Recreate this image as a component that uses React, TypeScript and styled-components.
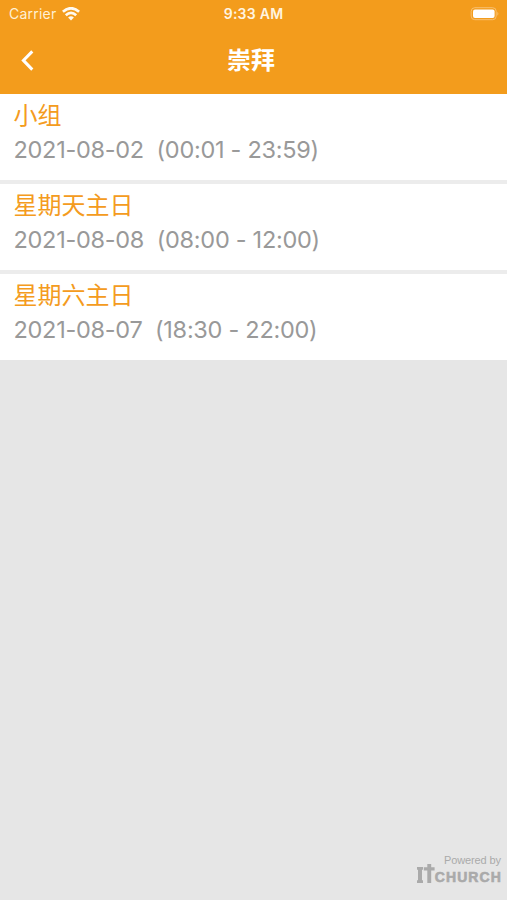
import React from "react";
import styled, { createGlobalStyle } from "styled-components";

const GlobalStyle = createGlobalStyle`
  * { box-sizing: border-box; }
  body {
    margin: 0;
    background: #e6e6e6;
    font-family: Inter, "Noto Sans CJK SC", sans-serif;
  }
`;

const Screen = styled.div`
  height: 900px;
  display: flex;
  flex-direction: column;
  background: #e6e6e6;
  overflow: hidden;
`;

const Header = styled.header`
  height: 94px;
  flex: none;
  background: #f39c1c;
  color: #fff;
`;

const StatusBar = styled.div`
  height: 27px;
  padding: 0 7px 0 9px;
  display: grid;
  grid-template-columns: 1fr auto 1fr;
  align-items: center;
  font-size: 14px;
  line-height: 27px;
`;

const Carrier = styled.div`
  display: flex;
  align-items: center;
  gap: 6px;
  color: #fff0d4;
  letter-spacing: 0.22px;
`;

const Clock = styled.div`
  margin-right: 2px;
  font-size: 14px;
  font-weight: 600;
  letter-spacing: 0.25px;
  color: #fff4e0;
`;

const BatterySlot = styled.div`
  display: flex;
  justify-content: flex-end;
`;

const NavBar = styled.nav`
  height: 67px;
  padding: 0 20px;
  display: grid;
  grid-template-columns: 1fr auto 1fr;
  align-items: center;
`;

const BackButton = styled.button`
  width: 16px;
  height: 24px;
  padding: 0;
  border: 0;
  background: none;
  display: flex;
`;

const Title = styled.h1`
  margin: 0 5px 0 0;
  font-size: 24px;
  line-height: 36px;
  font-weight: 700;
`;

const List = styled.ul`
  margin: 0;
  padding: 0;
  list-style: none;
  display: flex;
  flex-direction: column;
  gap: 4px;
  background: #ececec;
`;

const Item = styled.li`
  height: 86px;
  padding: 3px 14px 0 13.5px;
  background: #fff;
`;

const ItemTitle = styled.div`
  height: 35px;
  line-height: 37px;
  font-size: 24px;
  color: #f49b20;
`;

const ItemTime = styled.div`
  height: 35px;
  line-height: 35px;
  font-size: 23.5px;
  letter-spacing: -0.28px;
  color: #999;
  white-space: pre;
`;

const Footer = styled.footer`
  margin-top: auto;
  padding: 0 5px 17px 0;
  display: flex;
  flex-direction: column;
  align-items: flex-end;
  font-family: "Liberation Sans", sans-serif;
  color: #aaa;
`;

const Powered = styled.div`
  padding-right: 1px;
  font-size: 11px;
  line-height: 12px;
  letter-spacing: -0.1px;
`;

const Brand = styled.div`
  display: flex;
  align-items: flex-end;
  height: 17px;
`;

const BrandName = styled.span`
  font-size: 14px;
  line-height: 14px;
  height: 13px;
  font-weight: 700;
  letter-spacing: 1.1px;
  -webkit-text-stroke: 0.6px #aaa;
`;

const services = [
  { name: "小组", date: "2021-08-02", time: "(00:01 - 23:59)" },
  { name: "星期天主日", date: "2021-08-08", time: "(08:00 - 12:00)" },
  { name: "星期六主日", date: "2021-08-07", time: "(18:30 - 22:00)" },
];

const WifiIcon = () => (
  <svg width="18" height="14" viewBox="0 0 18 14" fill="none" stroke="#fffaf0" strokeWidth="2.7">
    <path d="M0.9 4.8Q9 -2.3 17.1 4.8" />
    <path d="M3.8 8.2Q9 3.5 14.2 8.2" />
    <path d="M6.1 10.5Q9 8 11.9 10.5L9 13.4Z" fill="#fffaf0" stroke="none" />
  </svg>
);

const BatteryIcon = () => (
  <svg width="30" height="14" viewBox="0 0 30 14">
    <rect x="1.2" y="0.7" width="25" height="12" rx="3.6" fill="none" stroke="#f8c070" />
    <rect x="3" y="2.5" width="21.6" height="8.6" rx="2" fill="#fff" />
    <path d="M27.4 4.8Q29.4 6.7 27.4 8.7Z" fill="#f8c070" />
  </svg>
);

export default function App() {
  return (
    <>
      <GlobalStyle />
      <Screen>
        <Header>
          <StatusBar>
            <Carrier>
              Carrier
              <WifiIcon />
            </Carrier>
            <Clock>9:33 AM</Clock>
            <BatterySlot>
              <BatteryIcon />
            </BatterySlot>
          </StatusBar>
          <NavBar>
            <BackButton aria-label="Back">
              <svg width="16" height="24" viewBox="0 0 16 24" fill="none" stroke="#fff" strokeWidth="3">
                <path d="M12.3 2.4L3.4 11.4L12.3 20.6" />
              </svg>
            </BackButton>
            <Title>崇拜</Title>
          </NavBar>
        </Header>
        <List>
          {services.map((s) => (
            <Item key={s.date}>
              <ItemTitle>{s.name}</ItemTitle>
              <ItemTime>{`${s.date}  ${s.time}`}</ItemTime>
            </Item>
          ))}
        </List>
        <Footer>
          <Powered>Powered by</Powered>
          <Brand>
            <svg width="18" height="19" viewBox="0 0 18 19" fill="#aaa">
              <path d="M0 3H6V5.7H5V16.3H6V19H0V16.3H1V5.7H0ZM6.8 3.2H10.3V0H14.2V3.2H17.6V6.6H14.2V19H10.3V6.6H6.8Z" />
            </svg>
            <BrandName>CHURCH</BrandName>
          </Brand>
        </Footer>
      </Screen>
    </>
  );
}
